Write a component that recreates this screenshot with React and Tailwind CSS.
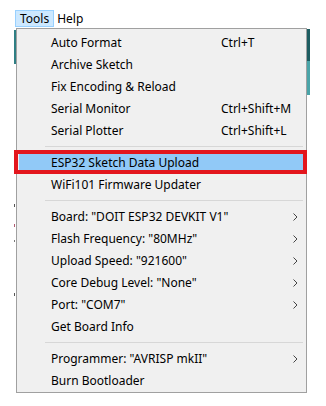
const groups = [
    [
        { label: 'Auto Format', shortcut: 'Ctrl+T' },
        { label: 'Archive Sketch' },
        { label: 'Fix Encoding & Reload' },
        { label: 'Serial Monitor', shortcut: 'Ctrl+Shift+M' },
        { label: 'Serial Plotter', shortcut: 'Ctrl+Shift+L' },
    ],
    [
        { label: 'ESP32 Sketch Data Upload', active: true },
        { label: 'WiFi101 Firmware Updater' },
    ],
    [
        { label: 'Board: "DOIT ESP32 DEVKIT V1"', sub: true },
        { label: 'Flash Frequency: "80MHz"', sub: true },
        { label: 'Upload Speed: "921600"', sub: true },
        { label: 'Core Debug Level: "None"', sub: true },
        { label: 'Port: "COM7"', sub: true },
        { label: 'Get Board Info' },
    ],
    [
        { label: 'Programmer: "AVRISP mkII"', sub: true },
        { label: 'Burn Bootloader' },
    ],
];

function Chevron() {
    return (
        <svg width="5" height="8" viewBox="0 0 5 8" className="absolute right-[6px] top-[7px]">
            <path d="M0.5 0.5 L4 4 L0.5 7.5" fill="none" stroke="#444" strokeWidth="1" />
        </svg>
    );
}

function MenuItem({ item }) {
    return (
        <div className="relative flex h-[22px] items-center px-[2px]">
            <div
                className={`relative flex h-[22px] flex-1 items-center pl-[32px] ${item.active ? 'bg-[#91c9f7]' : ''}`}
            >
                <span className="w-[170px] whitespace-nowrap">{item.label}</span>
                {item.shortcut && <span className="whitespace-nowrap">{item.shortcut}</span>}
                {item.sub && <Chevron />}
            </div>
            {item.active && (
                <div className="pointer-events-none absolute -left-[3px] -right-[1px] -top-[2px] h-[24px] border-[4px] border-[#e3161d]" />
            )}
        </div>
    );
}

export default function App() {
    return (
        <div
            className="relative h-[406px] w-[326px] overflow-hidden bg-white text-[12px] text-black"
            style={{ fontFamily: '"Noto Sans", "Open Sans", sans-serif' }}
        >
            {/* bits of the editor window peeking out behind the menu */}
            <div className="absolute left-[14px] top-[30px] h-[34px] w-[2px] bg-[#2f7f84]" />
            <div className="absolute left-[307px] top-[29px] h-[32px] w-[3px] bg-[#1d5d61]" />
            <div className="absolute left-[307px] top-[61px] h-[34px] w-[3px] bg-[#4aa4a8]" />
            <div className="absolute left-[14px] top-[204px] h-[3px] w-[1px] bg-[#555]" />
            <div className="absolute left-[14px] top-[224px] h-[3px] w-[1px] bg-[#b05a70]" />
            <div className="absolute left-[14px] top-[240px] h-[2px] w-[1px] bg-[#777]" />
            <div className="absolute left-[14px] top-[293px] h-[3px] w-[1px] bg-[#555]" />

            <div className="flex h-[28px] items-end pl-[15px]">
                <div className="mb-[1px] flex h-[17px] items-center border border-[#99d1ff] bg-[#cce8ff] px-[4px]">
                    Tools
                </div>
                <div className="mb-[1px] flex h-[17px] items-center px-[3px]">Help</div>
            </div>

            <div className="ml-[16px] w-[291px] border border-[#a0a0a0] bg-[#f0f0f0] pb-[0px] pt-[3px]">
                {groups.map((group, gi) => (
                    <div key={gi}>
                        {gi > 0 && (
                            <div className="flex h-[10px] items-center pb-[1px] pl-[28px] pr-[3px]">
                                <div className="h-px flex-1 bg-[#d7d7d7]" />
                            </div>
                        )}
                        {group.map((item) => (
                            <MenuItem key={item.label} item={item} />
                        ))}
                    </div>
                ))}
            </div>
        </div>
    );
}
